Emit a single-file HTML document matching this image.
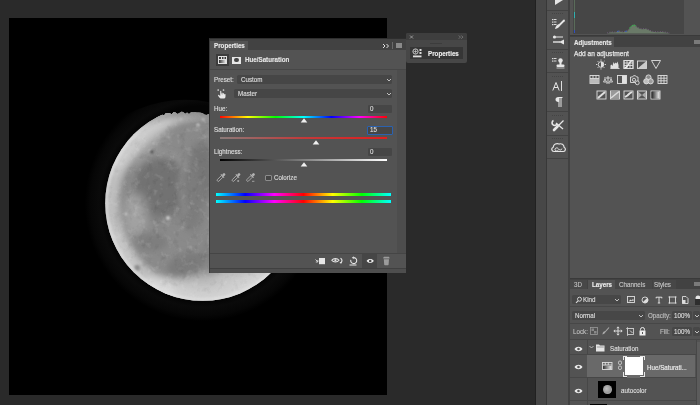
<!DOCTYPE html>
<html><head><meta charset="utf-8">
<style>
*{margin:0;padding:0;box-sizing:border-box}
html,body{width:700px;height:405px;overflow:hidden;background:#2a2a2a;font-family:"Liberation Sans",sans-serif;color:#d6d6d6}
.a{position:absolute}
.t{position:absolute;white-space:nowrap;font-size:7px;line-height:8px;transform:scaleX(.89);transform-origin:0 0;-webkit-text-stroke:.15px currentColor}
</style></head><body>
<!-- canvas -->
<div class="a" style="left:9px;top:18px;width:378px;height:377px;background:#000"></div>
<svg class="a" style="left:0;top:0" width="700" height="405">
  <defs>
    <radialGradient id="halo" cx="202.7" cy="203.3" r="118" gradientUnits="userSpaceOnUse">
      <stop offset="0.825" stop-color="#040404"/>
      <stop offset="0.88" stop-color="#0a0a0a"/>
      <stop offset="0.95" stop-color="#060606"/>
      <stop offset="1" stop-color="#000"/>
    </radialGradient>
    <radialGradient id="limb" cx="202.7" cy="203.3" r="97.5" gradientUnits="userSpaceOnUse">
      <stop offset="0" stop-color="#fff" stop-opacity="0"/>
      <stop offset="0.82" stop-color="#fff" stop-opacity="0"/>
      <stop offset="0.96" stop-color="#fff" stop-opacity="0.25"/>
      <stop offset="1" stop-color="#fff" stop-opacity="0.45"/>
    </radialGradient>
    <clipPath id="mc1"><circle cx="202.7" cy="203.3" r="97.5"/></clipPath>
    <clipPath id="hc"><circle cx="185.2" cy="223.8" r="124"/></clipPath>
    <clipPath id="mc2"><path d="M297.6 223.8 L297.6 225.8 L297.5 227.7 L297.4 229.7 L297.3 231.6 L297.2 233.6 L297.0 235.5 L296.8 237.5 L296.5 239.4 L296.2 241.4 L295.9 243.3 L295.5 245.2 L295.1 247.2 L294.7 249.1 L294.3 251.0 L293.8 252.9 L293.2 254.8 L292.7 256.7 L292.1 258.5 L291.5 260.4 L290.8 262.2 L290.1 264.1 L289.4 265.9 L288.7 267.7 L287.9 269.5 L287.1 271.3 L286.2 273.1 L285.3 274.8 L284.4 276.6 L283.5 278.3 L282.5 280.0 L281.5 281.7 L280.5 283.4 L279.5 285.0 L278.4 286.7 L277.3 288.3 L276.1 289.9 L275.0 291.4 L273.8 293.0 L272.6 294.5 L271.3 296.0 L270.0 297.5 L268.7 299.0 L267.4 300.5 L266.1 301.9 L264.7 303.3 L263.3 304.7 L261.9 306.0 L260.4 307.3 L258.9 308.6 L257.4 309.9 L255.9 311.2 L254.4 312.4 L252.8 313.6 L251.3 314.7 L249.7 315.9 L248.1 317.0 L246.4 318.1 L244.8 319.1 L243.1 320.1 L241.4 321.1 L239.7 322.1 L238.0 323.0 L236.2 323.9 L234.5 324.8 L232.7 325.7 L230.9 326.5 L229.1 327.3 L227.3 328.0 L225.5 328.7 L223.6 329.4 L221.8 330.1 L219.9 330.7 L218.1 331.3 L216.2 331.8 L214.3 332.4 L212.4 332.9 L210.5 333.3 L208.6 333.7 L206.6 334.1 L204.7 334.5 L202.8 334.8 L200.8 335.1 L198.9 335.4 L196.9 335.6 L195.0 335.8 L193.0 335.9 L191.1 336.0 L189.1 336.1 L187.2 336.2 L185.2 336.2 L183.2 336.2 L181.3 336.1 L179.3 336.0 L177.4 335.9 L175.4 335.8 L173.5 335.6 L171.5 335.4 L169.6 335.1 L167.6 334.8 L165.7 334.5 L163.8 334.1 L161.8 333.7 L159.9 333.3 L158.0 332.9 L156.1 332.4 L154.2 331.8 L152.3 331.3 L150.5 330.7 L148.6 330.1 L146.8 329.4 L144.9 328.7 L143.1 328.0 L141.3 327.3 L139.5 326.5 L137.7 325.7 L135.9 324.8 L134.2 323.9 L132.4 323.0 L130.7 322.1 L129.0 321.1 L127.3 320.1 L125.6 319.1 L124.0 318.1 L122.3 317.0 L120.7 315.9 L119.1 314.7 L117.6 313.6 L116.0 312.4 L114.5 311.2 L113.0 309.9 L111.5 308.6 L110.0 307.3 L108.5 306.0 L107.1 304.7 L105.7 303.3 L104.3 301.9 L103.0 300.5 L101.7 299.0 L100.4 297.5 L99.1 296.0 L97.8 294.5 L96.6 293.0 L95.4 291.4 L94.3 289.9 L93.1 288.3 L92.0 286.7 L90.9 285.0 L89.9 283.4 L88.9 281.7 L87.9 280.0 L86.9 278.3 L86.0 276.6 L85.1 274.8 L84.2 273.1 L83.3 271.3 L82.5 269.5 L81.7 267.7 L81.0 265.9 L80.3 264.1 L79.6 262.2 L78.9 260.4 L78.3 258.5 L77.7 256.7 L77.2 254.8 L76.6 252.9 L76.1 251.0 L75.7 249.1 L75.3 247.2 L74.9 245.2 L74.5 243.3 L74.2 241.4 L73.9 239.4 L73.6 237.5 L73.4 235.5 L73.2 233.6 L73.1 231.6 L73.0 229.7 L72.9 227.7 L72.8 225.8 L72.8 223.8 L72.8 221.8 L72.9 219.9 L73.0 217.9 L73.1 216.0 L73.2 214.0 L73.4 212.1 L73.6 210.1 L73.9 208.2 L74.2 206.2 L74.5 204.3 L74.9 202.4 L75.3 200.4 L75.7 198.5 L76.1 196.6 L76.6 194.7 L77.2 192.8 L77.7 190.9 L78.3 189.1 L78.9 187.2 L79.6 185.4 L80.3 183.5 L81.0 181.7 L81.7 179.9 L82.5 178.1 L83.3 176.3 L84.2 174.5 L85.1 172.8 L86.0 171.0 L86.9 169.3 L87.9 167.6 L88.9 165.9 L89.9 164.2 L90.9 162.6 L92.0 160.9 L93.1 159.3 L94.3 157.7 L95.4 156.2 L96.6 154.6 L97.8 153.1 L99.1 151.6 L100.4 150.1 L101.7 148.6 L103.0 147.1 L104.3 145.7 L105.7 144.3 L107.1 142.9 L108.5 141.6 L110.0 140.3 L111.5 139.0 L113.0 137.7 L114.5 136.4 L116.0 135.2 L118.3 135.0 L119.8 133.8 L121.1 132.3 L123.6 132.5 L124.1 129.7 L126.8 130.4 L127.9 128.4 L129.1 126.6 L131.4 126.7 L132.7 125.0 L134.4 124.0 L136.1 123.0 L138.0 122.6 L139.5 121.3 L141.8 121.5 L143.2 119.9 L145.2 119.5 L146.8 118.2 L148.7 117.9 L151.1 119.0 L152.4 116.4 L154.4 116.3 L156.2 115.4 L158.1 115.2 L160.0 114.7 L161.9 114.2 L164.1 115.5 L165.7 113.1 L167.6 113.0 L169.7 113.2 L171.7 114.2 L173.5 112.2 L175.5 112.4 L177.5 114.1 L179.4 113.0 L181.3 111.8 L183.2 112.1 L185.2 113.7 L187.1 112.4 L189.0 113.9 L191.0 112.2 L193.0 112.2 L195.0 112.2 L196.9 112.5 L198.9 112.5 L200.8 112.8 L202.7 113.2 L204.5 114.4 L206.4 114.9 L208.6 113.9 L210.4 114.7 L212.2 115.5 L214.2 115.7 L215.9 116.8 L217.9 116.8 L219.6 117.9 L221.8 117.6 L223.5 118.5 L225.4 119.1 L227.3 119.6 L229.1 120.3 L230.1 122.9 L232.0 123.5 L234.4 123.0 L235.8 124.4 L237.5 125.4 L239.5 125.8 L241.4 126.5 L242.6 128.4 L243.6 130.4 L246.1 130.0 L247.2 131.9 L248.4 133.5 L250.7 133.7 L252.5 134.5 L254.4 135.2 L255.9 136.4 L257.4 137.7 L258.9 139.0 L260.4 140.3 L261.9 141.6 L263.3 142.9 L264.7 144.3 L266.1 145.7 L267.4 147.1 L268.7 148.6 L270.0 150.1 L271.3 151.6 L272.6 153.1 L273.8 154.6 L275.0 156.2 L276.1 157.7 L277.3 159.3 L278.4 160.9 L279.5 162.6 L280.5 164.2 L281.5 165.9 L282.5 167.6 L283.5 169.3 L284.4 171.0 L285.3 172.8 L286.2 174.5 L287.1 176.3 L287.9 178.1 L288.7 179.9 L289.4 181.7 L290.1 183.5 L290.8 185.4 L291.5 187.2 L292.1 189.1 L292.7 190.9 L293.2 192.8 L293.8 194.7 L294.3 196.6 L294.7 198.5 L295.1 200.4 L295.5 202.4 L295.9 204.3 L296.2 206.2 L296.5 208.2 L296.8 210.1 L297.0 212.1 L297.2 214.0 L297.3 216.0 L297.4 217.9 L297.5 219.9 L297.6 221.8Z"/></clipPath>
    <filter id="soft" x="-5%" y="-5%" width="110%" height="110%"><feGaussianBlur stdDeviation=".45"/></filter>
    <filter id="bl" x="-50%" y="-50%" width="200%" height="200%"><feGaussianBlur stdDeviation="5"/></filter>
    <filter id="bl3" x="-50%" y="-50%" width="200%" height="200%"><feGaussianBlur stdDeviation="3"/></filter>
    <filter id="bl2" x="-50%" y="-50%" width="200%" height="200%"><feGaussianBlur stdDeviation="1"/></filter>
    <filter id="texL" x="0" y="0" width="100%" height="100%">
      <feTurbulence type="fractalNoise" baseFrequency="0.15" numOctaves="3" seed="3"/>
      <feColorMatrix type="matrix" values="0 0 0 0 1  0 0 0 0 1  0 0 0 0 1  3 0 0 0 -1.65"/>
    </filter>
    <filter id="texD" x="0" y="0" width="100%" height="100%">
      <feTurbulence type="fractalNoise" baseFrequency="0.15" numOctaves="3" seed="9"/>
      <feColorMatrix type="matrix" values="0 0 0 0 0  0 0 0 0 0  0 0 0 0 0  -3 0 0 0 1.35"/>
    </filter>
  </defs>
  <circle cx="202.7" cy="203.3" r="118" fill="url(#halo)" clip-path="url(#hc)"/>
  <g filter="url(#soft)"><g clip-path="url(#mc2)"><g clip-path="url(#mc1)">
    <rect x="100" y="100" width="210" height="210" fill="#8a8a8a"/>
    <g filter="url(#bl)">
      <ellipse cx="140" cy="140" rx="48" ry="13" fill="#b2b2b2" transform="rotate(-42 140 140)"/>
      <ellipse cx="160" cy="188" rx="30" ry="30" fill="#727272"/>
      <ellipse cx="202" cy="172" rx="14" ry="30" fill="#767676"/>
      <ellipse cx="205" cy="290" rx="75" ry="15" fill="#bebebe"/>
      <ellipse cx="245" cy="280" rx="35" ry="12" fill="#c6c6c6"/>
      <ellipse cx="120" cy="255" rx="12" ry="35" fill="#a6a6a6" transform="rotate(-25 120 255)"/>
      <ellipse cx="190" cy="268" rx="14" ry="8" fill="#858585"/>
      <ellipse cx="135" cy="215" rx="12" ry="22" fill="#a2a2a2"/>
      <ellipse cx="192" cy="200" rx="12" ry="32" fill="#7c7c7c"/>
    </g>
    <circle cx="202.7" cy="203.3" r="90" fill="none" stroke="#c8c8c8" stroke-width="12" opacity=".62" filter="url(#bl3)"/>
    <g filter="url(#bl3)" fill="none" stroke="#a4a4a4" stroke-width="3" opacity=".7">
      <path d="M130 200c-2-25 10-45 25-48 12-2 25 5 32 15"/>
      <path d="M184 165c-4 15-3 35 2 50"/>
    </g>
    <g filter="url(#bl2)" fill="#d8d8d8">
      <circle cx="198" cy="125" r="1.5"/><circle cx="203" cy="119" r="1.2"/><circle cx="181" cy="119" r="1"/>
      <circle cx="150" cy="150" r="1.6" fill="#bbb"/>
    </g>
    <g filter="url(#bl3)">
      <ellipse cx="186" cy="264" rx="20" ry="10" fill="#7a7a7a" transform="rotate(-20 186 264)"/>
      <ellipse cx="152" cy="242" rx="16" ry="9" fill="#7e7e7e"/>
      <ellipse cx="212" cy="250" rx="8" ry="14" fill="#828282"/>
      <ellipse cx="160" cy="288" rx="18" ry="6" fill="#cfcfcf" transform="rotate(25 160 288)"/>
    </g>
    <g filter="url(#bl2)">
      <circle cx="126" cy="214" r="1.3" fill="#d0d0d0"/>
      <circle cx="168" cy="218" r="2" fill="#d0d0d0"/>
      <circle cx="137" cy="268" r="3" fill="#707070"/>
      <circle cx="152" cy="152" r="1.8" fill="#555"/>
    </g>
    <rect x="100" y="100" width="210" height="210" filter="url(#texL)" opacity=".14"/>
    <rect x="100" y="100" width="210" height="210" filter="url(#texD)" opacity=".07"/>
    <rect x="100" y="100" width="210" height="210" fill="url(#limb)"/>
    <circle cx="202.7" cy="203.3" r="96" fill="none" stroke="#e0e0e0" stroke-width="3" opacity=".55" filter="url(#bl2)"/>
    <circle cx="185.2" cy="223.8" r="112.4" fill="none" stroke="#505050" stroke-width="10" opacity=".45" filter="url(#bl3)"/>
  </g></g></g>
</svg>


<!-- PROPERTIES PANEL -->
<div class="a" style="left:209px;top:38px;width:197px;height:235px;background:#535353;border-left:1px solid #393939;border-top:1px solid #2e2e2e"></div>
<div class="a" style="left:210px;top:39px;width:196px;height:11px;background:#424242"></div>
<div class="a" style="left:210px;top:41px;width:38px;height:9px;background:#535353"></div>
<div class="t" style="left:214px;top:42px;font-weight:bold;color:#e8e8e8;">Properties</div>
<svg class="a" style="left:382px;top:43px" width="8" height="6"><path d="M1 1l2 2-2 2M4.5 1l2 2-2 2" fill="none" stroke="#e0e0e0" stroke-width="1"/></svg>
<div class="a" style="left:392px;top:42px;width:1px;height:7px;background:#6a6a6a"></div>
<div class="a" style="left:396px;top:43px;width:6px;height:5px;background:#8a8a8a"></div>
<!-- right strip of body -->
<div class="a" style="left:397px;top:70px;width:9px;height:183px;background:#4d4d4d"></div>
<!-- header row -->
<div class="a" style="left:216px;top:54px;width:13px;height:12px;background:#3c3c3c"></div>
<svg class="a" style="left:216px;top:54px" width="13" height="12"><rect x="2.5" y="2.5" width="8" height="7" fill="none" stroke="#e0e0e0" stroke-width="1"/><path d="M3 5.5h7M5.5 3v2.5M8 3v2.5" stroke="#e0e0e0" stroke-width="1"/><defs><linearGradient id="hsg"><stop offset="0" stop-color="#333"/><stop offset="1" stop-color="#eee"/></linearGradient></defs><rect x="3" y="6" width="7" height="3" fill="url(#hsg)"/></svg>
<div class="a" style="left:232px;top:57px;width:9px;height:7px;background:#e6e6e6"></div>
<div class="a" style="left:234.2px;top:57.9px;width:4.6px;height:4.6px;border-radius:50%;background:#454545"></div>
<div class="t" style="left:245px;top:56px;font-weight:bold;color:#e4e4e4;">Hue/Saturation</div>
<div class="a" style="left:210px;top:69px;width:196px;height:1px;background:#474747"></div>
<!-- preset -->
<div class="t" style="left:214px;top:75.5px;color:#dedede">Preset:</div>
<div class="a" style="left:237px;top:75px;width:155px;height:9px;background:#464646;border-radius:1.5px"></div>
<div class="t" style="left:241px;top:75.5px;color:#dcdcdc">Custom</div>
<svg class="a" style="left:386px;top:78px" width="6" height="4"><path d="M1 1l2 2 2-2" fill="none" stroke="#cfcfcf" stroke-width="0.9"/></svg>
<!-- hand -->
<svg class="a" style="left:216px;top:87px" width="12" height="13"><path d="M4.5 11.5c-1.2-1-2.5-2.2-2.5-3.2 0-.6.6-.8 1-.4l1.2 1V4.3c0-.7 1.1-.7 1.1 0v3h.3V6.2c0-.6 1.1-.6 1.1 0v1.2h.3v-.8c0-.6 1.1-.6 1.1 0v.9h.3c0-.6 1.1-.6 1.1 0v2c0 1-.7 2-1.3 2z" fill="#e8e8e8"/><circle cx="2.2" cy="3" r=".85" fill="#ddd"/><circle cx="7.5" cy="3" r=".85" fill="#ddd"/></svg>
<div class="a" style="left:234px;top:89px;width:158px;height:9px;background:#464646;border-radius:1.5px"></div>
<div class="t" style="left:238px;top:89.5px;color:#dcdcdc">Master</div>
<svg class="a" style="left:386px;top:92px" width="6" height="4"><path d="M1 1l2 2 2-2" fill="none" stroke="#cfcfcf" stroke-width="0.9"/></svg>
<!-- hue -->
<div class="t" style="left:214px;top:104.5px;color:#dedede">Hue:</div>
<div class="a" style="left:368px;top:105px;width:24px;height:8px;background:#464646;border-radius:1px"></div>
<div class="t" style="left:370px;top:105px;color:#dedede">0</div>
<div class="a" style="left:220px;top:115.5px;width:167px;height:2px;background:linear-gradient(to right,#f00,#ff0 16.67%,#0f0 33.33%,#0ff 50%,#00f 66.67%,#f0f 83.33%,#f00)"></div>
<svg class="a" style="left:300px;top:118px" width="8" height="5"><path d="M4 0.3L7.3 4.5H0.7z" fill="#f0f0f0"/></svg>
<!-- saturation -->
<div class="t" style="left:214px;top:126px;color:#dedede">Saturation:</div>
<div class="a" style="left:367px;top:125.5px;width:26px;height:9px;background:#464646;border:1px solid #2b62b0;border-radius:1px"></div>
<div class="t" style="left:370px;top:126px;color:#dcdcdc">15</div>
<div class="a" style="left:220px;top:137px;width:167px;height:2px;background:linear-gradient(to right,#8a7a78,#c23a3a 50%,#e01e1e)"></div>
<svg class="a" style="left:312px;top:140px" width="8" height="5"><path d="M4 0.3L7.3 4.5H0.7z" fill="#f0f0f0"/></svg>
<!-- lightness -->
<div class="t" style="left:214px;top:147.5px;color:#dedede">Lightness:</div>
<div class="a" style="left:368px;top:147.5px;width:24px;height:8px;background:#464646;border-radius:1px"></div>
<div class="t" style="left:370px;top:147.5px;color:#dedede">0</div>
<div class="a" style="left:220px;top:159px;width:167px;height:2px;background:linear-gradient(to right,#000,#808080 50%,#fff)"></div>
<svg class="a" style="left:300px;top:162px" width="8" height="5"><path d="M4 0.3L7.3 4.5H0.7z" fill="#f0f0f0"/></svg>
<!-- eyedroppers -->
<svg class="a" style="left:214px;top:170px" width="46" height="14">
 <defs><g id="ed"><path d="M0 0h5.5" stroke="#b4b4b4" stroke-width="2.2" transform="translate(0 0)"/></g></defs>
 <g transform="translate(3.5 11) rotate(-45)">
  <rect x="0" y="-1.1" width="7" height="2.2" rx="1" fill="none" stroke="#b4b4b4" stroke-width=".8"/><path d="M7 -2.3v4.6" stroke="#b4b4b4" stroke-width="1"/><rect x="7.5" y="-1.3" width="3" height="2.6" rx="1.1" fill="#b4b4b4"/>
 </g>
 <g transform="translate(18.5 11) rotate(-45)">
  <rect x="0" y="-1.1" width="7" height="2.2" rx="1" fill="none" stroke="#b4b4b4" stroke-width=".8"/><path d="M7 -2.3v4.6" stroke="#b4b4b4" stroke-width="1"/><rect x="7.5" y="-1.3" width="3" height="2.6" rx="1.1" fill="#b4b4b4"/>
 </g>
 <g transform="translate(33 11) rotate(-45)">
  <rect x="0" y="-1.1" width="7" height="2.2" rx="1" fill="none" stroke="#b4b4b4" stroke-width=".8"/><path d="M7 -2.3v4.6" stroke="#b4b4b4" stroke-width="1"/><rect x="7.5" y="-1.3" width="3" height="2.6" rx="1.1" fill="#b4b4b4"/>
 </g>
 <path d="M23.2 11h2M24.2 10v2" stroke="#b4b4b4" stroke-width=".8"/><path d="M38 11.3h2.4" stroke="#b4b4b4" stroke-width=".8"/>
</svg>
<div class="a" style="left:265px;top:174.5px;width:6.5px;height:6.5px;border:1px solid #8c8c8c;background:#454545;border-radius:1px"></div>
<div class="t" style="left:274px;top:173.5px;color:#d8d8d8">Colorize</div>
<!-- colour bars -->
<div class="a" style="left:216px;top:193px;width:175px;height:3px;background:linear-gradient(to right,#0ff,#00f 16.67%,#f0f 33.33%,#f00 50%,#ff0 66.67%,#0f0 83.33%,#0ff)"></div>
<div class="a" style="left:216px;top:200px;width:175px;height:3px;background:linear-gradient(to right,#0ff,#00f 16.67%,#f0f 33.33%,#f00 50%,#ff0 66.67%,#0f0 83.33%,#0ff)"></div>
<!-- footer -->
<div class="a" style="left:210px;top:253px;width:196px;height:1px;background:#454545"></div>
<div class="a" style="left:362px;top:254px;width:15px;height:14px;background:#464646"></div>
<div class="a" style="left:210px;top:268px;width:196px;height:1px;background:#404040"></div>
<div class="a" style="left:210px;top:269px;width:196px;height:4px;background:#4e4e4e"></div>
<svg class="a" style="left:310px;top:253px" width="90" height="16">
 <rect x="9" y="5" width="6" height="6.2" fill="#e6e6e6"/><path d="M5.5 6.5l2.2 2.2M7.8 7v2h-2" fill="none" stroke="#ddd" stroke-width=".9"/>
 <path d="M21.8 7.3c1.6-2.2 5.6-2.2 7.2 0-1.6 2.2-5.6 2.2-7.2 0z" fill="none" stroke="#e6e6e6" stroke-width="1.1"/><circle cx="25.4" cy="7.3" r="1.1" fill="#e6e6e6"/>
 <path d="M30.5 5.2c1.8.8 2 3.2.4 4.6" fill="none" stroke="#e6e6e6" stroke-width="1.1"/><path d="M29.5 9.2l1.6 1.8.6-2.3z" fill="#e6e6e6"/>
 <path d="M40.8 6.8a3 3 0 1 0 2.6-2.2" fill="none" stroke="#e6e6e6" stroke-width="1.1"/><path d="M43.8 3.2l-2 1.5 2 1.4z" fill="#e6e6e6"/><path d="M39.5 12h7" stroke="#e6e6e6" stroke-width="1"/>
 <path d="M56.6 8c1.8-2.6 5.4-2.6 7.2 0-1.8 2.6-5.4 2.6-7.2 0z" fill="#f0f0f0"/><circle cx="60.2" cy="8" r="1.3" fill="#464646"/>
 <path d="M73.3 5.5h6.2v-.6c0-.8-.6-1.2-1.2-1.2h-3.8c-.6 0-1.2.4-1.2 1.2z" fill="#9c9c9c"/><path d="M73.8 6.3h5.2l-.4 5.2c0 .4-.3.7-.7.7h-3c-.4 0-.7-.3-.7-.7z" fill="#9c9c9c"/>
</svg>

<!-- MINI PANEL -->
<div class="a" style="left:406px;top:32.5px;width:60.5px;height:30.5px;background:#474747;border-radius:2px"></div>
<div class="a" style="left:406px;top:32.5px;width:60.5px;height:7px;background:#3e3e3e;border-radius:2px 2px 0 0"></div>
<svg class="a" style="left:408.5px;top:34.5px" width="6" height="5"><path d="M1 .5l3 3M4 .5l-3 3" stroke="#aaa" stroke-width=".8"/></svg>
<svg class="a" style="left:457.5px;top:34.5px" width="6" height="5"><path d="M.8 .5l1.6 1.6-1.6 1.6M3.3 .5l1.6 1.6-1.6 1.6" fill="none" stroke="#8a8a8a" stroke-width=".7"/></svg>
<div class="a" style="left:430px;top:43px;width:12px;height:1px;background:#3c3c3c"></div>
<div class="a" style="left:410px;top:47px;width:53px;height:12px;background:#363636"></div>
<svg class="a" style="left:412px;top:48px" width="11" height="10"><circle cx="3.5" cy="3.5" r="2.6" fill="none" stroke="#d8d8d8" stroke-width=".9"/><path d="M1.5 3.5h4M3.5 1.5v4" stroke="#d8d8d8" stroke-width=".6"/><rect x="7.5" y="1" width="2" height="2" fill="#ddd"/><rect x="7.5" y="4" width="2" height="2" fill="#ddd"/><rect x="1" y="7.5" width="8.5" height="1.8" fill="#ddd"/></svg>
<div class="t" style="left:428px;top:50px;font-weight:bold;color:#ececec;">Properties</div>
<!-- right app strip -->
<div class="a" style="left:535px;top:0;width:12px;height:405px;background:#474747;border-left:1.5px solid #212121"></div>
<div class="a" style="left:546px;top:0;width:1px;height:405px;background:#383838"></div>
<!-- tool column -->
<div class="a" style="left:547px;top:0;width:21px;height:405px;background:#525252"></div>
<div class="a" style="left:568px;top:0;width:2px;height:405px;background:#414141"></div>
<!-- right panel area -->
<div class="a" style="left:570px;top:0;width:130px;height:405px;background:#535353"></div>

<!-- tool column separators & icons -->
<div class="a" style="left:547px;top:10px;width:21px;height:1px;background:#434343"></div>
<div class="a" style="left:547px;top:48.5px;width:21px;height:1px;background:#434343"></div>
<div class="a" style="left:547px;top:72px;width:21px;height:1px;background:#434343"></div>
<div class="a" style="left:547px;top:110.5px;width:21px;height:1px;background:#434343"></div>
<div class="a" style="left:547px;top:135px;width:21px;height:1px;background:#434343"></div>
<div class="a" style="left:547px;top:158px;width:21px;height:1px;background:#434343"></div>
<div class="a" style="left:552px;top:13px;width:11px;height:1px;border-top:1px dotted #444"></div>
<div class="a" style="left:552px;top:52px;width:11px;height:1px;border-top:1px dotted #444"></div>
<div class="a" style="left:552px;top:75.5px;width:11px;height:1px;border-top:1px dotted #444"></div>
<div class="a" style="left:552px;top:114.5px;width:11px;height:1px;border-top:1px dotted #444"></div>
<div class="a" style="left:552px;top:138px;width:11px;height:1px;border-top:1px dotted #444"></div>
<svg class="a" style="left:547px;top:0" width="21" height="160">
 <path d="M8 0L16 0 8 5z" fill="#e6e6e6"/>
 <g fill="#d8d8d8"><rect x="5" y="19" width="1.5" height="1.2"/><rect x="5" y="21.5" width="1.5" height="1.2"/><rect x="5" y="24" width="1.5" height="1.2"/><rect x="7" y="19" width="2.5" height="1"/><rect x="7" y="21.5" width="2.5" height="1"/><rect x="7" y="24" width="2.5" height="1"/></g>
 <path d="M17 20.5L12 25.5" stroke="#e6e6e6" stroke-width="1.8" stroke-linecap="round"/><path d="M11.8 24.2c-2 .2-3.2 2-3.8 4.8 2.6-.5 4.4-1.6 4.8-3.8z" fill="#e6e6e6"/>
 <circle cx="7.5" cy="37" r="1.6" fill="#e6e6e6"/><path d="M9 37h7" stroke="#e6e6e6" stroke-width="1"/><path d="M6 42h7" stroke="#e6e6e6" stroke-width="1.4"/><path d="M12 42l5-2.5v5z" fill="#e6e6e6"/>
 <g fill="#d8d8d8"><rect x="5" y="58" width="1.5" height="1.2"/><rect x="5" y="60.5" width="1.5" height="1.2"/><rect x="7" y="58" width="2.5" height="1"/><rect x="7" y="60.5" width="2.5" height="1"/></g>
 <circle cx="13.5" cy="60.5" r="2.2" fill="#e6e6e6"/><rect x="12.5" y="62" width="2" height="3" fill="#e6e6e6"/><rect x="9.5" y="64.5" width="8" height="2.5" rx="1" fill="#e6e6e6"/><rect x="9.5" y="67.5" width="8" height="1" fill="#bbb"/>
 <path d="M5.8 90.5L9 82.5 12.2 90.5M7 87.5h4" fill="none" stroke="#e6e6e6" stroke-width="1"/><rect x="14" y="81" width="1" height="10" fill="#ddd"/>
 <path d="M9.5 97h6v1h-1v9h-1v-9h-1v9h-1v-5c-2 0-3-1-3-2.5s1-2.5 3-2.5z" fill="#e6e6e6"/>
 <path d="M9 123l7 6" stroke="#e6e6e6" stroke-width="1.3"/><path d="M6.5 120.5a2.6 2.6 0 1 0 3.6 3.2" fill="none" stroke="#e6e6e6" stroke-width="1.6"/>
 <path d="M16.5 120.5l-6 6" stroke="#e6e6e6" stroke-width="1.2"/><path d="M10.5 126.5l-3.5 3.5" stroke="#e6e6e6" stroke-width="2.6" stroke-linecap="round"/>
 <path d="M7 151.5c-2.5 0-3.2-3.5-.8-4.3.3-3 3.4-4.4 6-3.2 2.2-.8 4.8.6 4.9 3.3 2 .8 1.6 4.2-.6 4.2z" fill="none" stroke="#e6e6e6" stroke-width="1.2"/><path d="M8 149.5c0-1.8 2.6-2.2 3.5-.6.9 1.6 3.2 1.4 3.4-.3" fill="none" stroke="#e6e6e6" stroke-width="1"/><path d="M8 149.5c0 1.8 2.6 2 3.5.4" fill="none" stroke="#e6e6e6" stroke-width="1"/>
</svg>
<!-- histogram panel -->
<div class="a" style="left:573px;top:0;width:111px;height:33.5px;background:#464646"></div>
<div class="a" style="left:574px;top:0;width:1px;height:33px;background:#5a6c5a"></div>
<div class="a" style="left:574px;top:12px;width:1px;height:6px;background:#30b0b0"></div>
<div class="a" style="left:574px;top:30px;width:1px;height:3px;background:#3050c0"></div>
<svg class="a" style="left:573px;top:0" width="111" height="34">
 <path d="M34 33.5L38 32.3 42 32.6 46 31.6 50 32.2 54 31.4 57 28.5 59 26 61 25.3 63 26.4 66 28.6 69 29.3 73 29 76 30.2 79 31.8 84 32.2 89 32 94 32.8 97 33.5z" fill="#6a7a68"/>
 <path d="M34 33L38 31.8 42 32.1 46 31.1 50 31.7 54 30.9 57 28 59 25.5 61 24.8 63 25.9 66 28.1 69 28.8 73 28.5 76 29.7 79 31.3 84 31.7 89 31.5 94 32.3 97 33" fill="none" stroke="#8a6a9a" stroke-width=".6" stroke-dasharray="1 1.5"/>
 <path d="M56 28.5L59 25.8 61 25 63 26" fill="none" stroke="#3fb04f" stroke-width=".9"/>
 <path d="M44 31.5l2-.5M52 31.4l2-.3" stroke="#3a6ad0" stroke-width=".8"/>
</svg>
<!-- adjustments tab bar -->
<div class="a" style="left:570px;top:35px;width:130px;height:1px;background:#3a3a3a"></div>
<div class="a" style="left:570px;top:36px;width:130px;height:11px;background:#424242"></div>
<div class="a" style="left:570px;top:37px;width:44px;height:10px;background:#535353"></div>
<div class="t" style="left:574px;top:38.5px;font-weight:bold;color:#e6e6e6;">Adjustments</div>
<div class="a" style="left:694px;top:40px;width:6px;height:4px;background:#7a7a7a"></div>
<div class="t" style="left:574px;top:50px;color:#e4e4e4;transform:scaleX(.94);-webkit-text-stroke:.25px #e4e4e4">Add an adjustment</div>
<!-- adjustment icons -->
<svg class="a" style="left:570px;top:55px" width="130" height="50">
 <g fill="none" stroke="#e0e0e0" stroke-width="0.9">
  <circle cx="31" cy="9.5" r="2.8"/>
  <path d="M31 4.5v1.2M31 13.3v1.2M26 9.5h1.2M34.8 9.5H36M27.5 6l.8.8M33.7 12.2l.8.8M27.5 13l.8-.8M33.7 6.8l.8-.8"/>
  <rect x="54" y="5.5" width="9" height="8"/><path d="M54 8h9M54 10.5h9M57 5.5v8M60 5.5v8"/>
  <path d="M40.5 13.5h9"/>
  <rect x="67.5" y="6" width="9" height="7.5"/>
  <path d="M81.5 5.5h9l-4.5 8z"/>
  <rect x="20" y="20.5" width="9" height="8"/><path d="M20 23.5h9M23 20.5v3M26 20.5v3"/>
  <path d="M34 23h8M38 21v7M35 24l-1.5 3h3zM41 24l-1.5 3h3zM36 28h4"/>
  <rect x="47.5" y="20.5" width="9" height="8"/>
  <path d="M60.5 22h2l1-1.3h2l1 1.3h1.5v5.5h-7.5z"/><circle cx="64" cy="24.8" r="1.6"/><circle cx="67.3" cy="27.8" r="1.9" fill="#535353"/>
  <circle cx="78.5" cy="22.5" r="2.6" fill="#8a8a8a"/><circle cx="76.3" cy="26.3" r="2.6" fill="#bdbdbd"/><circle cx="80.7" cy="26.3" r="2.6" fill="#9c9c9c"/>
  <rect x="88" y="20.5" width="9" height="8"/><path d="M88 23.2h9M88 25.8h9M91 20.5v8M94 20.5v8"/>
  <rect x="27" y="36" width="9" height="8"/><rect x="40.5" y="36" width="9" height="8"/><rect x="54" y="36" width="9" height="8"/><rect x="67.5" y="36" width="9" height="8"/><rect x="81" y="36" width="9" height="8"/>
 </g>
 <rect x="54" y="5.5" width="9" height="8" fill="none" stroke="#e0e0e0" stroke-width=".9"/>
 <path d="M54.5 13c3-.5 3.5-3 4.5-4.5s2-2.5 3.5-3" fill="none" stroke="#f0f0f0" stroke-width="1.2"/>
 <path d="M40.5 13.5v-3l1-1 1 1.5 1-4 1 2 1-1.5 1 1 1-2 1 3.5v3z" fill="#e0e0e0"/>
 <path d="M67.5 13.5l9-7.5v7.5z" fill="#ccc"/>
 <path d="M31 6.7a2.8 2.8 0 0 1 0 5.6z" fill="#e0e0e0"/>
 <rect x="20" y="24" width="9" height="4.5" fill="#bbb"/>
 <rect x="52" y="20.5" width="4.5" height="8" fill="#e0e0e0"/>
 <path d="M28 43l7-6" stroke="#e0e0e0" stroke-width="2"/>
 <rect x="41" y="36.5" width="8" height="7" fill="#999"/><path d="M41 43l8-6.5" stroke="#ddd" stroke-width="1.5"/>
 <path d="M55 42l2.5-1.5 2-2 2.5-1.5" stroke="#e0e0e0" stroke-width="2"/>
 <path d="M68 36.5l4 3.5 4-3.5v7l-4-3.5-4 3.5z" fill="#aaa"/>
 <rect x="81.5" y="36.5" width="8" height="7" fill="url(#bw)"/>
 <defs><linearGradient id="bw"><stop offset="0" stop-color="#222"/><stop offset="1" stop-color="#eee"/></linearGradient></defs>
</svg>

<!-- LAYERS PANEL -->
<div class="a" style="left:570px;top:278px;width:130px;height:1px;background:#3a3a3a"></div>
<div class="a" style="left:570px;top:279px;width:130px;height:10px;background:#424242"></div>
<div class="a" style="left:570px;top:280px;width:17px;height:9px;background:#484848"></div>
<div class="a" style="left:588px;top:280px;width:26.5px;height:9px;background:#535353"></div>
<div class="a" style="left:615px;top:280px;width:37px;height:9px;background:#474747"></div>
<div class="a" style="left:653px;top:280px;width:23px;height:9px;background:#474747"></div>
<div class="t" style="left:573.5px;top:281px;color:#bdbdbd">3D</div>
<div class="t" style="left:591.5px;top:281px;font-weight:bold;color:#ececec">Layers</div>
<div class="t" style="left:619px;top:281px;color:#c4c4c4">Channels</div>
<div class="t" style="left:654px;top:281px;color:#c4c4c4">Styles</div>
<div class="a" style="left:694px;top:282px;width:6px;height:4px;background:#7a7a7a"></div>
<!-- kind row -->
<div class="a" style="left:572px;top:295px;width:49px;height:9px;background:#474747;border-radius:1.5px"></div>
<svg class="a" style="left:575px;top:296px" width="8" height="8"><circle cx="4.5" cy="3.2" r="2" fill="none" stroke="#ddd" stroke-width=".9"/><path d="M3 4.8L1 6.8" stroke="#ddd" stroke-width="1.1"/></svg>
<div class="t" style="left:583px;top:296px;color:#dcdcdc">Kind</div>
<svg class="a" style="left:614px;top:298px" width="6" height="4"><path d="M1 1l2 2 2-2" fill="none" stroke="#cfcfcf" stroke-width=".9"/></svg>
<svg class="a" style="left:625px;top:294px" width="75" height="12">
 <rect x="2.5" y="2.5" width="7" height="6" fill="none" stroke="#ddd" stroke-width=".9"/><path d="M3.5 7.5l2-2 1 1 1.5-1.5 1 1.5z" fill="#ddd"/>
 <circle cx="20" cy="6" r="3" fill="none" stroke="#ddd" stroke-width=".9"/><path d="M20 3a3 3 0 0 1 0 6z" fill="#ddd" transform="rotate(45 20 6)"/>
 <path d="M31.2 3.2h5.6M34 3.2v5.8M32.8 9h2.4M31.2 3v1.4M36.8 3v1.4" stroke="#ddd" stroke-width="1" fill="none"/>
 <rect x="44.5" y="3" width="6" height="6" fill="none" stroke="#ddd" stroke-width=".9"/><path d="M43.5 3h1.5M43.5 9h1.5M50 3h1.5M50 9h1.5" stroke="#ddd" stroke-width="1"/>
 <path d="M57.5 2.5h3.5l2 2v5h-5.5z" fill="none" stroke="#ddd" stroke-width=".9"/><rect x="57" y="6" width="3.5" height="3.5" fill="#ddd"/>
 <circle cx="73" cy="4" r="2.5" fill="#e6e6e6"/><rect x="70" y="5" width="5" height="6" fill="#2e2e2e"/>
</svg>
<div class="a" style="left:570px;top:306px;width:130px;height:1px;background:#474747"></div>
<!-- blend row -->
<div class="a" style="left:572px;top:311px;width:73px;height:9px;background:#474747;border-radius:1.5px"></div>
<div class="t" style="left:575px;top:312px;color:#dcdcdc">Normal</div>
<svg class="a" style="left:638px;top:314px" width="6" height="4"><path d="M1 1l2 2 2-2" fill="none" stroke="#cfcfcf" stroke-width=".9"/></svg>
<div class="t" style="left:647.5px;top:312px;color:#bcbcbc">Opacity:</div>
<div class="a" style="left:672px;top:311px;width:20px;height:9px;background:#474747;border-radius:1.5px"></div>
<div class="t" style="left:674px;top:312px;color:#dcdcdc">100%</div>
<div class="a" style="left:693px;top:311px;width:7px;height:9px;background:#474747;border-radius:1.5px"></div>
<svg class="a" style="left:694px;top:314px" width="6" height="4"><path d="M1 1l2 2 2-2" fill="none" stroke="#cfcfcf" stroke-width=".9"/></svg>
<div class="a" style="left:570px;top:323px;width:130px;height:1px;background:#474747"></div>
<!-- lock row -->
<div class="t" style="left:573px;top:328px;color:#bcbcbc">Lock:</div>
<svg class="a" style="left:588px;top:325px" width="62" height="12">
 <rect x="2.5" y="2.5" width="7" height="7" fill="none" stroke="#9a9a9a" stroke-width=".8"/><rect x="3.5" y="3.5" width="2.5" height="2.5" fill="#8a8a8a"/><rect x="6" y="6" width="2.5" height="2.5" fill="#8a8a8a"/>
 <path d="M21 2.5l-4 4.5" stroke="#aaa" stroke-width="1.1"/><path d="M16.8 6.2c-1.2.2-2 1-2.4 3.3 1.8-.4 2.8-1.2 3-2.4z" fill="#aaa"/>
 <path d="M30 2v8M26 6h8" stroke="#ddd" stroke-width="1"/><path d="M28.8 3.2L30 1.8 31.2 3.2M28.8 8.8L30 10.2 31.2 8.8M27.2 4.8L25.8 6 27.2 7.2M32.8 4.8L34.2 6 32.8 7.2" fill="none" stroke="#ddd" stroke-width=".9"/>
 <rect x="39.5" y="3.5" width="6" height="6" fill="none" stroke="#ccc" stroke-width=".9"/><path d="M38 3.5h8M39.5 2v9" stroke="#ccc" stroke-width=".7"/><path d="M42 5.5l2.5 2.5" stroke="#ddd" stroke-width=".9"/>
 <path d="M52.5 5.5v-1a2 2 0 0 1 4 0v1" fill="none" stroke="#eee" stroke-width="1"/><rect x="51.5" y="5.5" width="6" height="5" fill="#eee"/><rect x="54" y="7" width="1" height="2" fill="#535353"/>
</svg>
<div class="t" style="left:660px;top:328px;color:#bcbcbc">Fill:</div>
<div class="a" style="left:672px;top:327px;width:20px;height:9px;background:#474747;border-radius:1.5px"></div>
<div class="t" style="left:674px;top:328px;color:#dcdcdc">100%</div>
<div class="a" style="left:693px;top:327px;width:7px;height:9px;background:#474747;border-radius:1.5px"></div>
<svg class="a" style="left:694px;top:330px" width="6" height="4"><path d="M1 1l2 2 2-2" fill="none" stroke="#cfcfcf" stroke-width=".9"/></svg>
<div class="a" style="left:570px;top:338.5px;width:130px;height:1px;background:#474747"></div>
<!-- layer rows -->
<div class="a" style="left:587px;top:339px;width:1px;height:66px;background:#474747"></div>
<div class="a" style="left:570px;top:354px;width:127px;height:1px;background:#474747"></div>
<div class="a" style="left:587px;top:355px;width:108px;height:22px;background:#696969"></div>
<div class="a" style="left:570px;top:377px;width:127px;height:1px;background:#474747"></div>
<div class="a" style="left:570px;top:400px;width:127px;height:1px;background:#474747"></div>
<div class="a" style="left:696px;top:339px;width:1px;height:66px;background:#474747"></div>
<div class="a" style="left:697px;top:342px;width:3px;height:63px;background:#5c5c5c"></div>
<svg class="a" style="left:570px;top:339.5px" width="17" height="66">
 <g fill="#ececec"><path d="M4.5 9c1.9-2.9 6.1-2.9 8 0-1.9 2.9-6.1 2.9-8 0z"/><path d="M4.5 27c1.9-2.9 6.1-2.9 8 0-1.9 2.9-6.1 2.9-8 0z"/><path d="M4.5 51c1.9-2.9 6.1-2.9 8 0-1.9 2.9-6.1 2.9-8 0z"/></g>
 <g fill="#555"><circle cx="8.5" cy="9" r="1.3"/><circle cx="8.5" cy="27" r="1.3"/><circle cx="8.5" cy="51" r="1.3"/></g>
</svg>
<svg class="a" style="left:588px;top:339px" width="40" height="40">
 <path d="M1.5 7l2 2 2-2" fill="none" stroke="#cfcfcf" stroke-width=".8"/>
 <path d="M8 5.5h3l1 1h4.5v6H8z" fill="#e6e6e6"/><rect x="8.8" y="7.5" width="7" height="1" fill="#999"/>
 <rect x="14.5" y="23.5" width="9.5" height="7" fill="none" stroke="#ddd" stroke-width=".9"/><path d="M15 26h9M17.3 23.5v2.5M20.3 23.5v2.5" stroke="#ddd" stroke-width=".9"/><rect x="15" y="27" width="8.5" height="3" fill="url(#hsg)"/>
 <rect x="30.5" y="22" width="3" height="3.5" rx="1.3" fill="none" stroke="#ddd" stroke-width=".8"/><rect x="30.5" y="27" width="3" height="3.5" rx="1.3" fill="none" stroke="#ddd" stroke-width=".8"/>
</svg>
<div class="a" style="left:622.5px;top:355.5px;width:22px;height:21.5px;border:1px solid #e6e6e6"></div>
<div class="a" style="left:627px;top:354.5px;width:13px;height:23px;background:#696969"></div>
<div class="a" style="left:621.5px;top:360px;width:24px;height:12px;background:#696969"></div>
<div class="a" style="left:624.5px;top:357px;width:18px;height:18px;background:#fff"></div>
<div class="t" style="left:647px;top:363.5px;color:#eeeeee">Hue/Saturati...</div>
<div class="t" style="left:610px;top:345px;color:#dddddd">Saturation</div>
<div class="a" style="left:598px;top:381px;width:18px;height:17px;background:#000"></div>
<div class="a" style="left:603px;top:385px;width:8.5px;height:9px;border-radius:50%;background:radial-gradient(circle at 40% 40%,#c0c0c0,#999 55%,#bbb)"></div>
<div class="t" style="left:621px;top:387px;color:#dddddd">autocolor</div>
<div class="a" style="left:590px;top:404px;width:17px;height:1px;background:#000"></div>
</body></html>
